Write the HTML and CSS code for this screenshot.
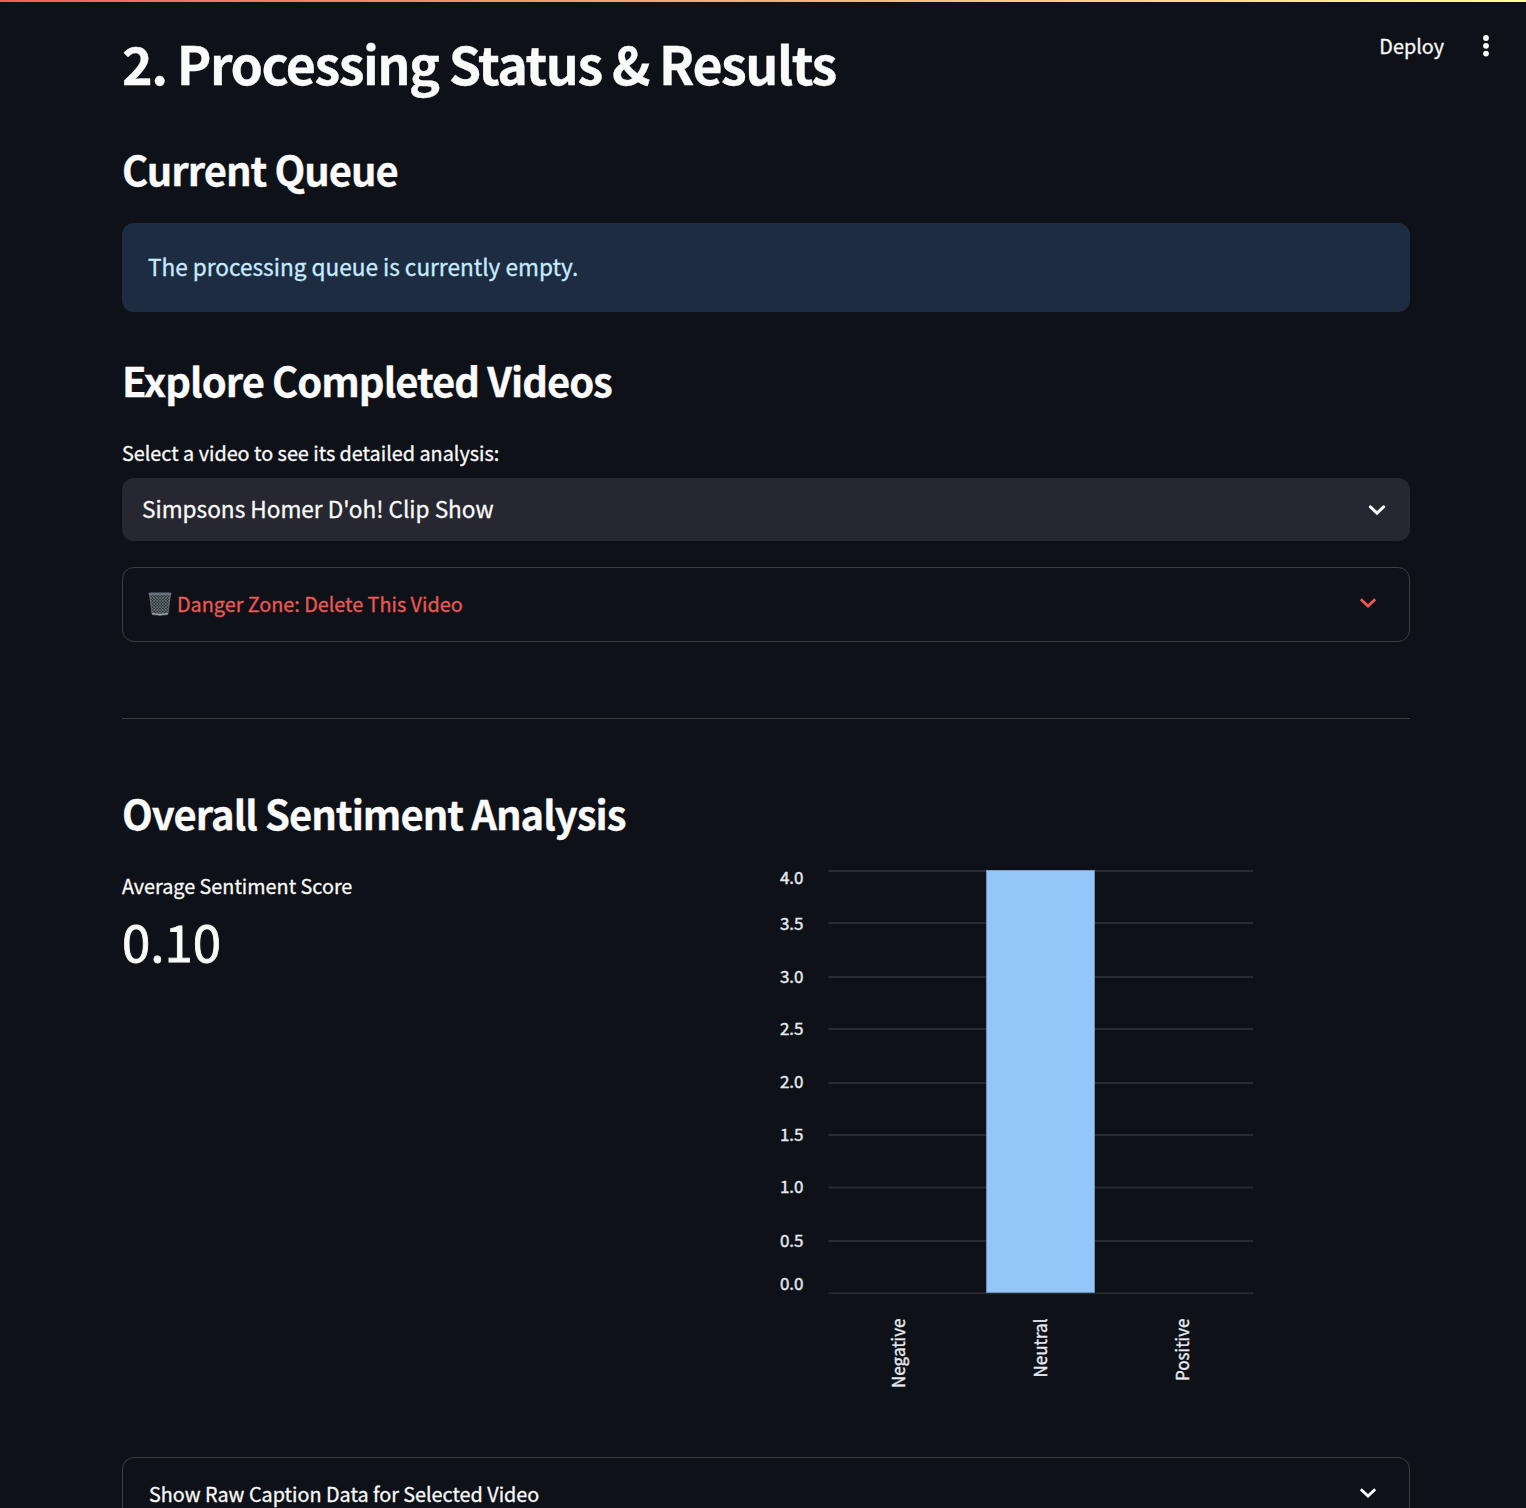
FILE: index.html
```html
<!DOCTYPE html>
<html lang="en">
<head>
<meta charset="utf-8">
<title>Processing Status &amp; Results</title>
<link rel="stylesheet" href="styles.css">
</head>
<body>
<div class="decoration"></div>
<div class="toolbar">
  <span class="deploy">Deploy</span>
  <svg class="menu" width="8" height="24" viewBox="0 0 8 24"><circle cx="4" cy="4" r="2.9"/><circle cx="4" cy="11.8" r="2.9"/><circle cx="4" cy="19.6" r="2.9"/></svg>
</div>
<main class="page">
  <h1>2. Processing Status &amp; Results</h1>
  <h2 class="queue-title">Current Queue</h2>
  <div class="alert">The processing queue is currently empty.</div>
  <h2 class="explore-title">Explore Completed Videos</h2>
  <div class="label select-label">Select a video to see its detailed analysis:</div>
  <div class="select">
    <span>Simpsons Homer D'oh! Clip Show</span>
    <svg class="chevron" width="18" height="12" viewBox="0 0 18 12"><path d="M2.4 2.8 9 9.200l6.600-6.400"/></svg>
  </div>
  <div class="expander danger">
    <svg class="trash" width="24" height="24" viewBox="0 0 24 24">
      <defs><pattern id="mesh" width="3" height="3" patternUnits="userSpaceOnUse"><path d="M0 0l3 3M3 0 0 3" stroke="#767d82" stroke-width=".6"/></pattern></defs>
      <path d="M1.500 2h21l-2.700 20.500q-7.800 1.500-15.600 0z" fill="#34393e"/>
      <path d="M1.500 2h21l-2.700 20.500q-7.800 1.500-15.600 0z" fill="url(#mesh)" stroke="#70777c" stroke-width=".8"/>
      <path d="M4 21.700q8 1.600 16 0" fill="none" stroke="#9ba1a5" stroke-width="1.300"/>
      <rect x=".6" y=".6" width="22.800" height="2.400" rx="1.200" fill="#68727d"/>
    </svg>
    <span class="danger-text">Danger Zone: Delete This Video</span>
    <svg class="chevron" width="18" height="12" viewBox="0 0 18 12"><path d="M1.800 2.200 9 9l7.200-6.800"/></svg>
  </div>
  <hr>
  <h2 class="overall-title">Overall Sentiment Analysis</h2>
  <div class="columns">
    <div class="metric">
      <div class="label metric-label">Average Sentiment Score</div>
      <div class="value">0.10</div>
    </div>
    <svg class="chart" width="490" height="540" viewBox="770 860 490 540">
      <g class="grid">
        <path d="M828.500 871H1253M828.500 923H1253M828.500 977H1253M828.500 1029H1253M828.500 1083H1253M828.500 1135H1253M828.500 1187.500H1253M828.500 1241H1253M828.500 1293.300H1253"/>
      </g>
      <rect x="986.500" y="870.300" width="108" height="422.200" fill="#94c6f9" stroke="#7ea8d4" stroke-width=".6"/>
      <g class="axis" text-anchor="end">
        <text x="803.500" y="884">4.0</text><text x="803.500" y="930">3.5</text><text x="803.500" y="983">3.0</text>
        <text x="803.500" y="1035">2.5</text><text x="803.500" y="1088">2.0</text><text x="803.500" y="1141">1.5</text>
        <text x="803.500" y="1193">1.0</text><text x="803.500" y="1246.600">0.5</text><text x="803.500" y="1289.500">0.0</text>
      </g>
      <g class="axis" text-anchor="end">
        <text transform="translate(905 1318.500) rotate(-90)">Negative</text>
        <text transform="translate(1047 1318.500) rotate(-90)">Neutral</text>
        <text transform="translate(1189 1318.500) rotate(-90)">Positive</text>
      </g>
    </svg>
  </div>
  <div class="expander raw">
    <span class="raw-text">Show Raw Caption Data for Selected Video</span>
    <svg class="chevron" width="18" height="12" viewBox="0 0 18 12"><path d="M1.800 2.200 9 9l7.200-6.800"/></svg>
  </div>
</main>
</body>
</html>
```
FILE: styles.css
```css
* { box-sizing: border-box; }
html { background: #0e1117; }
body {
  margin: 0;
  height: 1508px;
  overflow: hidden;
  position: relative;
  background: #0e1117;
  color: #fafafa;
  font-family: "Noto Sans CJK SC", "Noto Sans", sans-serif;
  font-size: 22.6px;
  -webkit-text-stroke: 0.3px currentColor;
}
svg { display: block; flex: none; }
.decoration {
  height: 2px;
  background: linear-gradient(90deg, #f0605a, #ffff8e);
}
.toolbar {
  position: absolute;
  top: 31px;
  right: 36px;
  height: 30px;
  display: flex;
  align-items: center;
  gap: 38px;
}
.deploy { font-size: 19.8px; line-height: 30px; }
.menu { fill: #fafafa; }
.page { width: 1288px; margin-left: 122px; padding-top: 29px; }
h1, h2 { margin: 0; font-weight: 700; white-space: nowrap; }
h1 { font-size: 52px; line-height: 64px; height: 64px; letter-spacing: -1.53px; }
h2 { font-size: 40px; line-height: 50px; height: 50px; letter-spacing: -0.99px; }
.queue-title { margin-top: 49px; }
.alert {
  margin-top: 29px;
  height: 89px;
  padding: 0 26px;
  line-height: 88px;
  border-radius: 12px;
  background: #1e2c42;
  color: #c7ebff;
}
.explore-title { margin-top: 43px; }
.label { font-size: 19.8px; line-height: 30px; height: 30px; }
.select-label { margin-top: 33px; }
.select {
  margin-top: 10px;
  height: 63px;
  padding: 0 24px 0 20px;
  display: flex;
  align-items: center;
  justify-content: space-between;
  line-height: 62px;
  border-radius: 12px;
  background: #262730;
}
.select span { height: 63px; }
.chevron { fill: none; stroke: #fafafa; stroke-width: 3; stroke-linecap: round; stroke-linejoin: miter; }
.expander {
  display: flex;
  align-items: center;
  height: 75px;
  padding: 0 32px 0 26px;
  border: 1px solid #3c3e43;
  border-radius: 12px;
  font-size: 19.8px;
}
.expander span { line-height: 71px; height: 73px; flex: 1; }
.danger { margin-top: 26px; padding-left: 25px; color: #ec5953; }
.danger .chevron, .raw .chevron { stroke-linecap: butt; stroke-width: 2.8; margin-bottom: 4px; }
.danger .chevron { stroke: #ec5953; }
.trash { margin: 0 5px 2px 0; }
hr { margin: 76px 0 0; border: 0; height: 1px; background: #3c3e43; }
.overall-title { margin-top: 69px; }
.columns { display: flex; justify-content: space-between; margin-top: 22px; padding-right: 150px; }
.metric-label { margin-top: 11px; }
.value { font-size: 51px; line-height: 60px; margin-top: 9px; -webkit-text-stroke-width: 0.8px; }
.grid path { stroke: #272a31; stroke-width: 2; fill: none; }
.axis text { fill: #e6eaf1; font-size: 17px; stroke: #e6eaf1; stroke-width: 0.4px; }
.raw { margin-top: 57px; }
```
